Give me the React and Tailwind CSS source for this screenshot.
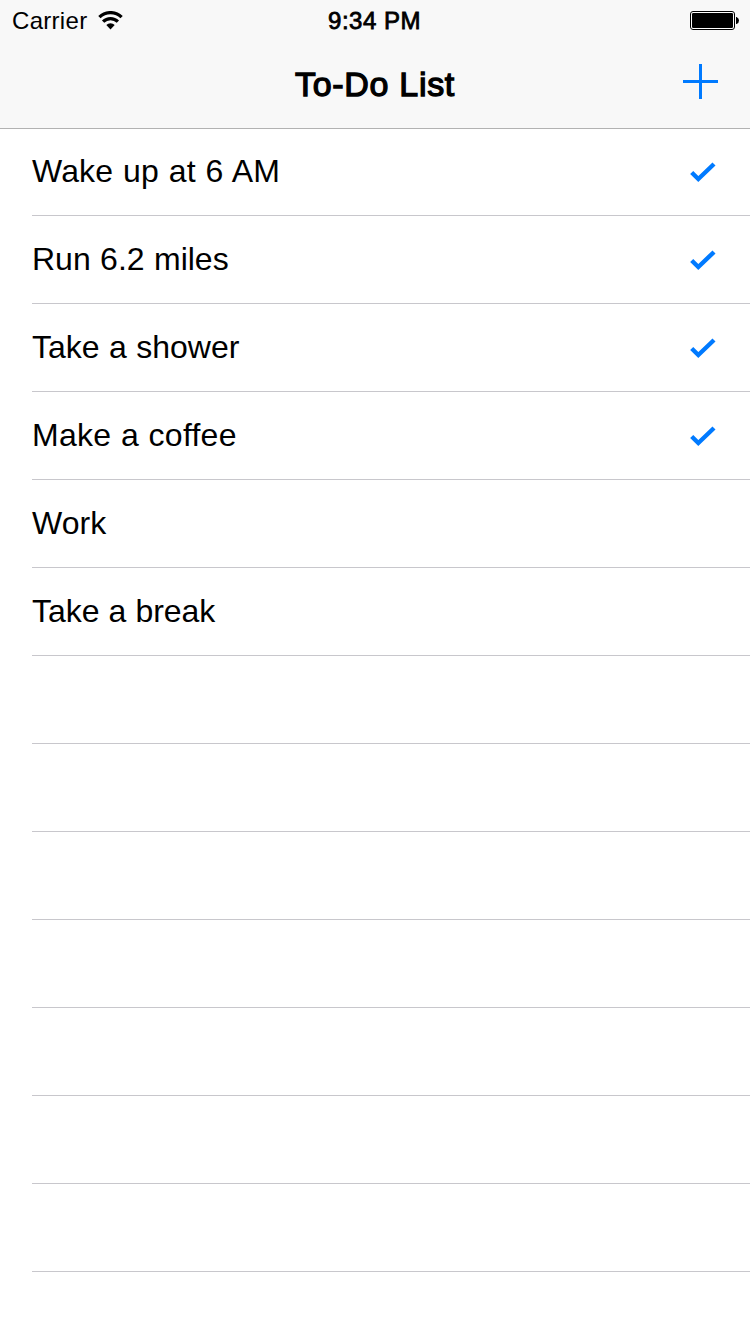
const rows = [
  { text: "Wake up at 6 AM", done: true, spacing: "tracking-[0.15px] [word-spacing:0.8px]" },
  { text: "Run 6.2 miles", done: true, spacing: "tracking-[0px] [word-spacing:0.5px]" },
  { text: "Take a shower", done: true, spacing: "tracking-[0px] [word-spacing:0.5px]" },
  { text: "Make a coffee", done: true, spacing: "tracking-[0.25px] [word-spacing:0.5px]" },
  { text: "Work", done: false, spacing: "tracking-[0.05px]" },
  { text: "Take a break", done: false, spacing: "tracking-[-0.05px] [word-spacing:0.3px]" },
  ...Array.from({ length: 7 }, () => ({ text: "", done: false, spacing: "" })),
];

function WifiIcon() {
  return (
    <svg width="26" height="20" viewBox="0 0 26 20" fill="none" stroke="#000">
      <path d="M1.4 6.2A15.6 15.6 0 0 1 23.6 6.2" strokeWidth="3.2" />
      <path d="M5.1 10.7A10.4 10.4 0 0 1 19.9 10.7" strokeWidth="3.2" />
      <path d="M12.5 18.4L8.3 14.1A6 6.6 0 0 1 16.7 14.1Z" fill="#000" stroke="none" />
    </svg>
  );
}

function BatteryIcon() {
  return (
    <svg width="50" height="20" viewBox="0 0 50 20">
      <rect x="0.5" y="0.5" width="44" height="18" rx="2.5" fill="#fff" stroke="#000" />
      <rect x="2" y="2" width="41" height="15" rx="1.2" fill="#000" />
      <path d="M46 6h.6q2.4 1 2.4 3.5t-2.4 3.5H46z" fill="#000" />
    </svg>
  );
}

function PlusIcon() {
  return (
    <svg width="35" height="35" viewBox="0 0 35 35" fill="#007aff">
      <rect x="16" width="3" height="35" />
      <rect y="16" width="35" height="3" />
    </svg>
  );
}

function CheckIcon() {
  return (
    <svg width="26" height="21" viewBox="0 0 26 21" fill="none" stroke="#007aff" strokeWidth="4.4">
      <path d="M1.7 10.5L8.3 17L24 2" />
    </svg>
  );
}

export default function App() {
  return (
    <div className="flex h-[1334px] w-[750px] flex-col overflow-hidden bg-white font-['Liberation_Sans',Arial,sans-serif] text-black">
      <header className="flex h-[129px] shrink-0 flex-col border-b border-[#b2b2b2] bg-[#f8f8f8]">
        <div className="grid h-[42px] grid-cols-3 items-center text-[24px] leading-[42px]">
          <div className="flex items-center gap-[11px] pl-3">
            <span className="tracking-[0.3px]">Carrier</span>
            <WifiIcon />
          </div>
          <span className="pr-px text-center tracking-[0.5px] [-webkit-text-stroke:0.8px_#000]">9:34 PM</span>
          <div className="flex justify-end pr-2.5">
            <BatteryIcon />
          </div>
        </div>
        <div className="grid h-[86px] grid-cols-[1fr_auto_1fr] items-start pr-8">
          <h1 className="col-start-2 pl-8 text-[34px] leading-[84px] tracking-[0.7px] [-webkit-text-stroke:1.3px_#000]">To-Do List</h1>
          <button className="mt-[22px] justify-self-end" aria-label="Add">
            <PlusIcon />
          </button>
        </div>
      </header>
      <ul className="-mt-px flex flex-col pl-8">
        {rows.map((row, i) => (
          <li key={i} className="flex h-[88px] items-start justify-between border-b border-[#c8c7cc] pr-[34px]">
            <span className={"whitespace-pre text-[32px] leading-[86px] " + row.spacing}>{row.text}</span>
            {row.done && (
              <span className="pt-[34px]">
                <CheckIcon />
              </span>
            )}
          </li>
        ))}
      </ul>
    </div>
  );
}
